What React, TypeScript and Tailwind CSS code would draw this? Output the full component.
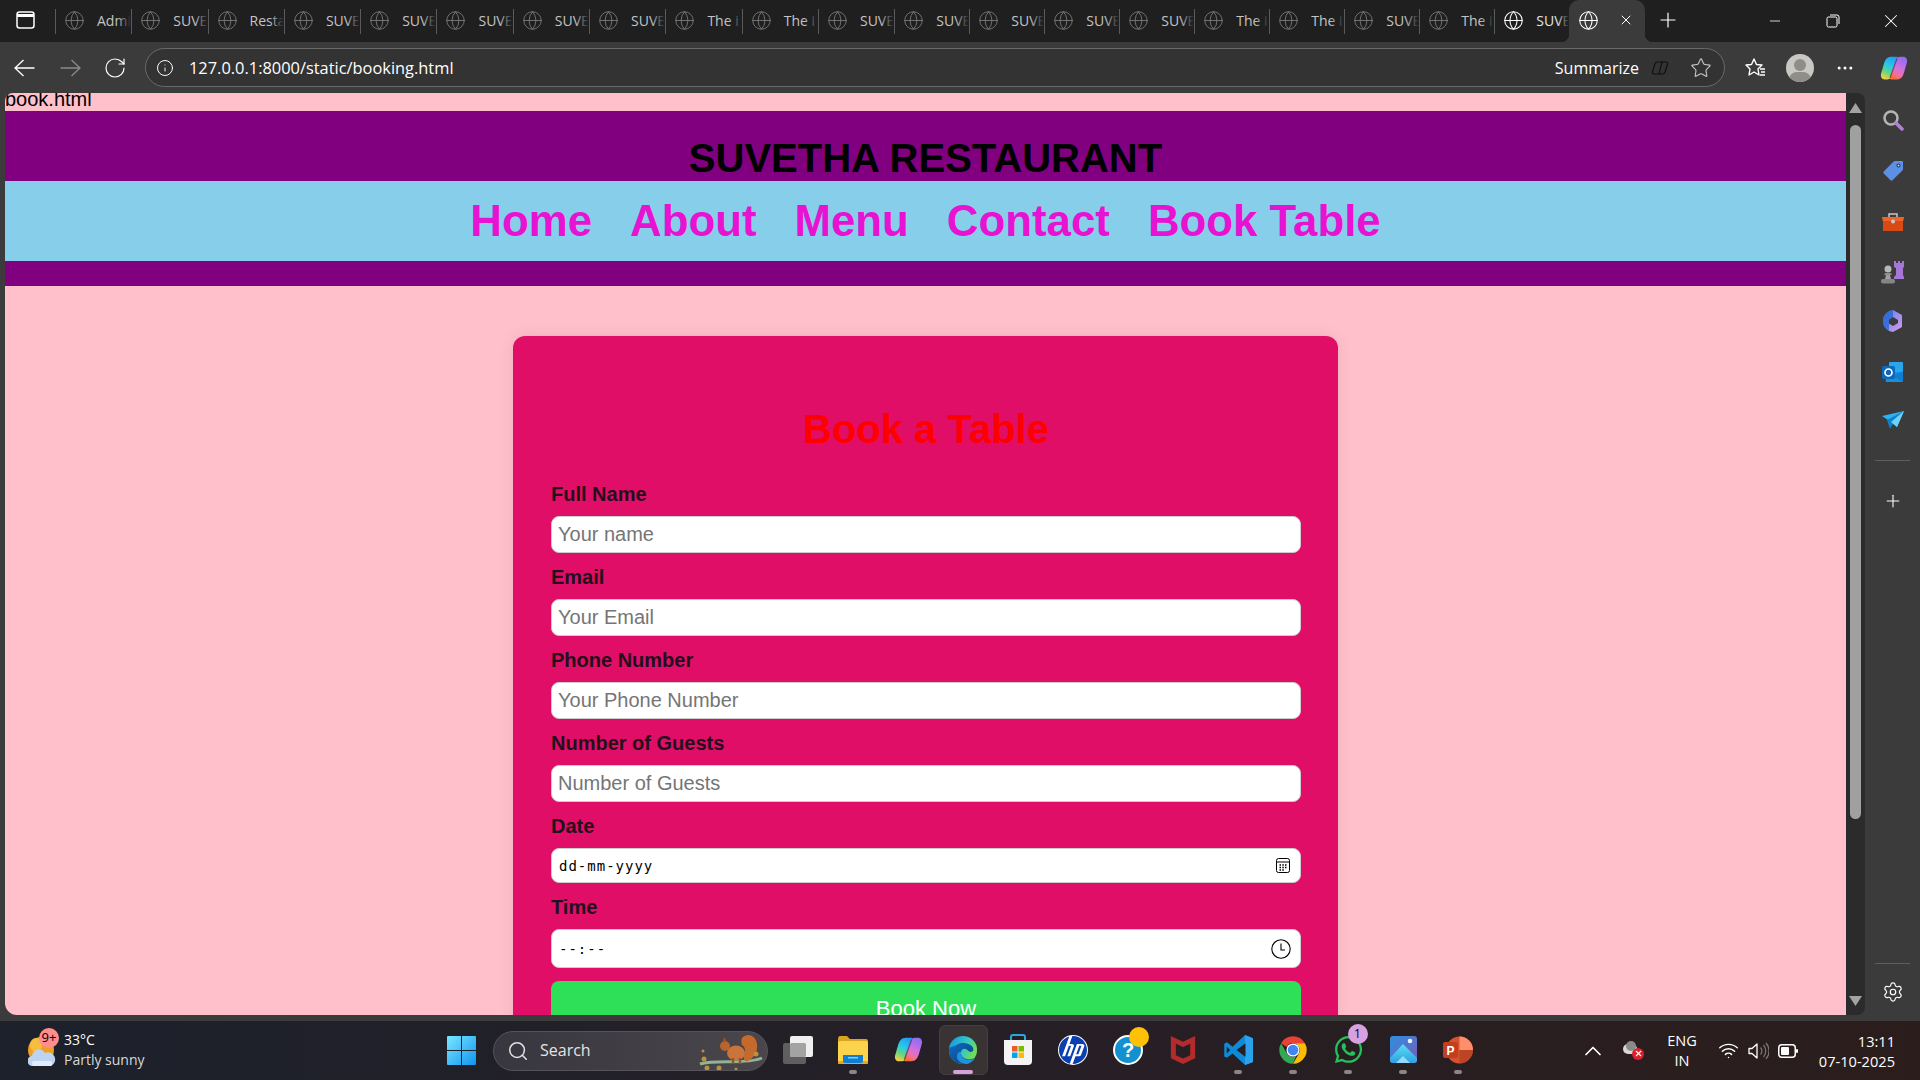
import React from "react";
import { RotateCw, Info, Star, MoreHorizontal, X, Plus, Minus, Globe, Search, Settings, ChevronUp, Wifi } from "lucide-react";
import { SiHp, SiMcafee } from "react-icons/si";
import { FaWhatsapp } from "react-icons/fa";

const tabs = ["Admi","SUVE","Resta","SUVE","SUVE","SUVE","SUVE","SUVE","The i","The i","SUVE","SUVE","SUVE","SUVE","SUVE","The i","The i","SUVE","The i"];

function Copilot({ id, size }: { id: string; size: number }) {
  return (
    <svg width={size} height={size} viewBox="0 0 32 32">
      <defs>
        <linearGradient id={id + "a"} x1=".7" y1="0" x2=".3" y2="1"><stop offset="0" stopColor="#1f9df5" /><stop offset=".4" stopColor="#27c8e8" /><stop offset=".7" stopColor="#5ed68a" /><stop offset="1" stopColor="#f2cf3e" /></linearGradient>
        <linearGradient id={id + "b"} x1=".7" y1="0" x2=".3" y2="1"><stop offset="0" stopColor="#8f6cf0" /><stop offset=".5" stopColor="#d070e0" /><stop offset=".8" stopColor="#f27098" /><stop offset="1" stopColor="#ff6a30" /></linearGradient>
      </defs>
      <path d="M13 3h6c1.500 0 2 1.500 1.500 3L14.500 24c-1 3-3 5-6 5H5.500C2 29 .5 26 1.200 22.500L4.500 11C6 6 8.500 3 13 3z" fill={`url(#${id}a)`} />
      <path d="M19 29h-6c-1.500 0-2-1.500-1.500-3L17.500 8c1-3 3-5 6-5h3C30 3 31.500 6 30.800 9.500L27.500 21C26 26 23.500 29 19 29z" fill={`url(#${id}b)`} />
      <path d="M11.500 27 19.500 5" stroke="#2a2020" strokeWidth="1.400" opacity=".55" />
    </svg>
  );
}

function Edge() {
  return (
    <svg width="30" height="30" viewBox="0 0 32 32">
      <defs>
        <linearGradient id="eg" x1=".1" y1=".2" x2=".9" y2=".6"><stop offset="0" stopColor="#1a9fe0" /><stop offset=".55" stopColor="#36c8c0" /><stop offset="1" stopColor="#6fdc58" /></linearGradient>
        <linearGradient id="eb" x1="0" y1="0" x2="1" y2="1"><stop offset="0" stopColor="#0f6cc0" /><stop offset="1" stopColor="#0a3f80" /></linearGradient>
      </defs>
      <circle cx="16" cy="16" r="15" fill="url(#eg)" />
      <path d="M1 16C1 24.500 8 31 16 31c5 0 9.500-2.500 12.500-6.500-3 1.500-6 2-9 1-4-1.200-6.500-4.500-5.500-8 .7-2.500 3.500-3.500 6-2 1.500 1 2 2.500 4 2.500 3 0 4-2.500 2-5.500-3-4-11-5.500-16-2.500C5 13 1 12 1 16z" fill="url(#eb)" />
      <path d="M14 18c-1 3.500 1.500 6.800 5.500 8 3 1 6 .5 9-1-2 3-5 5-8 5.800C14 31 9 27 9.500 22c.3-2.500 2.500-5 4.500-4z" fill="#1f94dd" />
    </svg>
  );
}

function Chrome() {
  return (
    <svg width="30" height="30" viewBox="0 0 48 48">
      <path d="M24 2a22 22 0 0 1 19.050 11H24a11 11 0 0 0-10 6L4.950 13A22 22 0 0 1 24 2z" fill="#e94235" />
      <path d="M43.050 13A22 22 0 0 1 24 46l9.500-16.500A11 11 0 0 0 33.500 19 11 11 0 0 0 24 13z" fill="#fbbc05" />
      <path d="M4.950 13 14 29a11 11 0 0 0 15 4.500L24 46A22 22 0 0 1 4.950 13z" fill="#34a853" />
      <circle cx="24" cy="24" r="10.500" fill="#fff" />
      <circle cx="24" cy="24" r="8.500" fill="#4285f4" />
    </svg>
  );
}

function Squirrel() {
  return (
    <svg width="68" height="40" viewBox="0 0 68 40">
      <path d="M4 32C20 27 50 33 66 26" stroke="#8fb596" strokeWidth="3" fill="none" />
      <path d="M46 6c6-6 14-2 15 6 1 7-3 14-9 17-4 1-5-3-4-6 2-5 1-8-2-10-1-2-1-5 0-7z" fill="#c46a2c" />
      <ellipse cx="40" cy="21" rx="9" ry="7.500" fill="#c9743a" />
      <circle cx="29" cy="14" r="5" fill="#b8642c" />
      <path d="M27 10l1-5 3 5z" fill="#a5541f" />
      <path d="M37 26v6M44 26v6" stroke="#9c5322" strokeWidth="2.500" />
      <g fill="#b9913f"><circle cx="8" cy="27" r="2.500" /><circle cx="11" cy="36" r="2.500" /><circle cx="23" cy="36" r="2.500" /><circle cx="60" cy="22" r="2.500" /><circle cx="7" cy="19" r="1.500" /><circle cx="40" cy="37" r="1.500" /></g>
    </svg>
  );
}

function TaskView() {
  return (
    <svg width="30" height="28" viewBox="0 0 30 28">
      <rect x="0" y="7" width="23" height="21" rx="2" fill="#5f5f5f" />
      <rect x="7" y="0" width="23" height="21" rx="2" fill="#efefef" />
      <rect x="7" y="7" width="16" height="14" rx="1.500" fill="#a3a3a3" />
    </svg>
  );
}

function Explorer() {
  return (
    <svg width="30" height="28" viewBox="0 0 30 28">
      <path d="M0 3c0-2 1-3 2-3h7l3 3h16a2 2 0 0 1 2 2v3H0z" fill="#d9a520" />
      <rect x="0" y="5" width="30" height="23" rx="2" fill="#fcd34d" />
      <rect x="0" y="25" width="30" height="3" rx="1" fill="#e8a818" />
      <path d="M5 19h20v6a2 2 0 0 1-2 2H7a2 2 0 0 1-2-2z" fill="#0f7fd6" />
      <rect x="10" y="21" width="10" height="1.500" fill="#7fd0f8" />
    </svg>
  );
}

function Store() {
  return (
    <svg width="30" height="31" viewBox="0 0 30 31">
      <path d="M8 8V3a2 2 0 0 1 2-2h10a2 2 0 0 1 2 2v5" fill="none" stroke="#26a9e0" strokeWidth="2" />
      <path d="M1 6h28v21a4 4 0 0 1-4 4H5a4 4 0 0 1-4-4z" fill="#f4f4f4" />
      <rect x="9" y="12" width="5.500" height="5.500" fill="#ee5a2a" />
      <rect x="15.500" y="12" width="5.500" height="5.500" fill="#7fba00" />
      <rect x="9" y="18.500" width="5.500" height="5.500" fill="#00a4ef" />
      <rect x="15.500" y="18.500" width="5.500" height="5.500" fill="#ffb900" />
    </svg>
  );
}

function Photos() {
  return (
    <svg width="27" height="27" viewBox="0 0 27 27">
      <defs>
        <linearGradient id="phb" x1="0" y1="0" x2="1" y2="1"><stop offset="0" stopColor="#2e8fe0" /><stop offset="1" stopColor="#7a5ab8" /></linearGradient>
        <linearGradient id="phm" x1="0" y1="0" x2="0" y2="1"><stop offset="0" stopColor="#5be0f0" /><stop offset="1" stopColor="#2f9fe6" /></linearGradient>
      </defs>
      <rect width="27" height="27" rx="3" fill="url(#phb)" />
      <circle cx="20" cy="5" r="2.300" fill="#e6f4ff" />
      <path d="M0 22 13 8l14 14v2a3 3 0 0 1-3 3H3a3 3 0 0 1-3-3z" fill="url(#phm)" />
      <path d="M6 27l7-7 7 7z" fill="#bdeefb" opacity=".7" />
    </svg>
  );
}

function PowerPoint() {
  return (
    <svg width="30" height="30" viewBox="0 0 30 30">
      <circle cx="16.500" cy="15" r="13.500" fill="#d35230" />
      <path d="M16.500 1.500a13.500 13.500 0 0 1 13.500 13.500H16.500z" fill="#ff8f6b" />
      <path d="M16.500 15H30a13.500 13.500 0 0 1-13.500 13.500z" fill="#a83a1c" opacity=".55" />
      <rect x="0" y="7" width="15" height="16" rx="2" fill="#c43e1c" />
      <text x="7.500" y="20" textAnchor="middle" fontSize="12" fontWeight="700" fill="#fff" fontFamily="Liberation Sans, sans-serif">P</text>
    </svg>
  );
}

function VSCode() {
  return (
    <svg width="30" height="30" viewBox="0 0 24 24">
      <path d="M17.600 0 7.700 9.300 3.100 5.800 1 6.900v10.200l2.100 1.100 4.600-3.500 9.900 9.300L24 21.500v-19L17.600 0zm.4 6.700v10.600L11 12l7-5.300zM3 9.300 5.700 12 3 14.700V9.300z" fill="#0e8ad8" />
      <path d="M17.600 0 24 2.500v19L17.600 24z" fill="#2aa3ec" />
      <path d="M18 6.700v10.600L11 12z" fill="#272023" />
    </svg>
  );
}

function TaskSlot({ children, dot, active }: { children: React.ReactNode; dot?: boolean; active?: boolean }) {
  return (
    <div className="relative w-[55px] h-[59px] flex items-center justify-center">
      {active && <div className="absolute left-[3px] top-[4px] w-[49px] h-[50px] rounded-md bg-[#3a3333] border border-[#453e3e]" />}
      <div className="relative flex items-center justify-center -mt-[2px]">{children}</div>
      {dot && <div className="absolute left-[23.500px] top-[49px] w-[8px] h-[4px] rounded-full bg-[#8a8686]" />}
      {active && <div className="absolute left-[17.500px] top-[49px] w-[20px] h-[4px] rounded-full bg-[#d9a0e0]" />}
    </div>
  );
}

function Field({ label, placeholder }: { label: string; placeholder: string }) {
  return (
    <div className="flex flex-col">
      <label className="text-[20px] leading-[23px] font-bold text-[#24101c] mt-[13px] mb-[10px]">{label}</label>
      <input readOnly placeholder={placeholder} className="h-[37px] w-full rounded-lg border border-[#cccccc] bg-white px-[6px] text-[20px] text-black placeholder:text-[#757575] outline-none" />
    </div>
  );
}

export default function App() {
  return (
    <div className="w-[1920px] h-[1080px] overflow-hidden flex flex-col bg-[#3b3b3b] font-['Open_Sans',sans-serif]">
      {/* tab strip */}
      <div className="h-[42px] bg-[#1f1f1f] flex items-stretch relative shrink-0">
        <div className="w-[56px] flex items-center justify-center pr-[5px] pb-[2px] relative">
          <svg width="19" height="18" viewBox="0 0 19 18" fill="none" stroke="#fff" strokeWidth="1.500"><rect x="1" y="1" width="17" height="16" rx="2.500" /><path d="M1 4.500h17" strokeWidth="3" /></svg>
          <div className="absolute right-0 top-[9px] h-[25px] w-px bg-[#5a5a5a]" />
        </div>
        {tabs.map((t, i) => (
          <div key={i} className={i < 11 ? "relative w-[76.300px] flex items-center pl-[8px] pb-[2px] overflow-hidden" : "relative w-[75px] flex items-center pl-[8px] pb-[2px] overflow-hidden"}>
            <Globe size={21} strokeWidth={1} className="text-[#7b7b7b] shrink-0" />
            <span className="ml-[12px] text-[14px] whitespace-nowrap text-[#c4c4c4]">{t}</span>
            <div className="absolute right-[1px] top-0 bottom-0 w-[14px] bg-gradient-to-r from-transparent to-[#1f1f1f]" />
            <div className="absolute right-0 top-[9px] h-[25px] w-px bg-[#5a5a5a]" />
          </div>
        ))}
        <div className="relative w-[74px] flex items-center pl-[8px] pb-[2px] overflow-hidden">
          <Globe size={21} strokeWidth={1.2} className="text-white shrink-0" />
          <span className="ml-[12px] text-[14px] whitespace-nowrap text-[#e4e4e4]">SUVE</span>
          <div className="absolute right-0 top-0 bottom-0 w-[12px] bg-gradient-to-r from-transparent to-[#1f1f1f]" />
        </div>
        <div className="relative w-[76px] rounded-t-[10px] bg-[#3b3b3b] flex items-center pl-[9px] pb-[2px]">
          <Globe size={21} strokeWidth={1.2} className="text-white shrink-0" />
          <X size={16} strokeWidth={1.5} className="text-white ml-[19px]" />
          <div className="absolute -left-[8px] bottom-0 w-[8px] h-[8px] bg-[radial-gradient(circle_at_0_0,#1f1f1f_8px,#3b3b3b_8.500px)]" />
          <div className="absolute -right-[8px] bottom-0 w-[8px] h-[8px] bg-[radial-gradient(circle_at_100%_0,#1f1f1f_8px,#3b3b3b_8.500px)]" />
        </div>
        <div className="ml-[11px] w-[24px] flex items-center justify-center pb-[2px]">
          <Plus size={24} strokeWidth={1.2} className="text-white" />
        </div>
        <div className="ml-auto flex items-center">
          <div className="w-[58px] flex justify-center"><Minus size={16} strokeWidth={1.2} className="text-white" /></div>
          <div className="w-[58px] flex justify-center">
            <svg width="14" height="14" viewBox="0 0 14 14" fill="none" stroke="#fff" strokeWidth="1"><rect x="1" y="3" width="10" height="10" rx="1.500" /><path d="M4 1h7a2 2 0 0 1 2 2v7" /></svg>
          </div>
          <div className="w-[58px] flex justify-center"><X size={22} strokeWidth={1.1} className="text-white" /></div>
        </div>
      </div>

      {/* toolbar */}
      <div className="h-[51px] shrink-0 bg-[#3b3b3b] flex items-center">
        <div className="w-[49px] flex justify-center">
          <svg width="21" height="18" viewBox="0 0 21 18" fill="none" stroke="#fff" strokeWidth="1.300"><path d="M20.500 9H1M9.500 1 1 9l8.500 8" /></svg>
        </div>
        <div className="w-[42px] flex justify-center">
          <svg width="21" height="18" viewBox="0 0 21 18" fill="none" stroke="#8a8a8a" strokeWidth="1.300"><path d="M.5 9H20M11.500 1 20 9l-8.500 8" /></svg>
        </div>
        <div className="w-[47px] flex justify-center"><RotateCw size={24} strokeWidth={1.2} className="text-white" /></div>
        <div className="ml-[7px] w-[1580px] h-[39px] rounded-full border border-[#6a6a6a] bg-[#333333] flex items-center pl-[10px] pr-[12px]">
          <Info size={18} strokeWidth={1.3} className="text-white" />
          <span className="ml-[15px] pt-[1px] text-[16.400px] text-white">127.0.0.1:8000/static/booking.html</span>
          <span className="ml-auto pt-[1px] text-[16px] text-white">Summarize</span>
          <svg className="ml-[12px]" width="18" height="18" viewBox="0 0 18 18" fill="none" stroke="#111" strokeWidth="1.200"><path d="M6 3h5L8 15H3C2 15 1 14 1.500 12.500L4 5c.3-1 1-2 2-2z" /><path d="M10 3h5c1 0 2 1 1.500 2.500L14 13c-.3 1-1 2-2 2H8" /></svg>
          <Star size={22} strokeWidth={1.2} className="ml-[21px] text-[#c8c8c8]" />
        </div>
        <div className="ml-[18px]">
          <svg width="24" height="24" viewBox="0 0 24 24" fill="none" stroke="#fff" strokeWidth="1.400"><path d="M11 3l2.500 5.500 5.500.5-4 4 1 6-5-3-5 3 1-6-4-4 5.500-.5z" strokeLinejoin="round" /><path d="M17 13h5M18 16h4M17 19h5" /></svg>
        </div>
        <div className="ml-[19px] relative w-[28px] h-[28px] rounded-full bg-[#c9c8c2] overflow-hidden">
          <div className="absolute left-[8px] top-[5px] w-[12px] h-[12px] rounded-full bg-[#8f8e8a]" />
          <div className="absolute left-[3px] top-[18px] w-[22px] h-[16px] rounded-full bg-[#8f8e8a]" />
        </div>
        <div className="ml-[17px] w-[28px] flex justify-center"><MoreHorizontal size={20} strokeWidth={1.6} className="text-white" /></div>
        <div className="ml-[21px]"><Copilot id="cp1" size={28} /></div>
      </div>

      {/* body */}
      <div className="h-[922px] shrink-0 flex">
        <div className="w-[5px]" />
        <div className="w-[1841px] bg-[#ffc0cb] rounded-tl-[8px] rounded-bl-[12px] overflow-hidden font-['Liberation_Sans',sans-serif] text-black">
          <div className="h-[18px] overflow-hidden text-[20px] leading-[23px]"><div className="-mt-[5px]">book.html</div></div>
          <header className="bg-[#800080] pb-[25px]">
            <h1 className="h-[70px] flex items-end justify-center text-[40px] leading-[46px] font-bold text-black">SUVETHA RESTAURANT</h1>
            <nav className="h-[80px] bg-[#87ceeb] flex items-center justify-center gap-[38px] text-[43.800px] font-bold text-[#e812d2]">
              <a>Home</a><a>About</a><a>Menu</a><a>Contact</a><a>Book Table</a>
            </nav>
          </header>
          <div className="mx-auto mt-[50px] w-[825px] rounded-[12px] bg-[#e00e66] pl-[38px] pr-[37px] shadow-[0_0_16px_rgba(0,0,0,0.08)]">
            <h2 className="h-[134px] pt-[70px] text-center text-[40px] leading-[46px] font-bold text-[#ff0000]">Book a Table</h2>
            <div>
              <Field label="Full Name" placeholder="Your name" />
              <Field label="Email" placeholder="Your Email" />
              <Field label="Phone Number" placeholder="Your Phone Number" />
              <Field label="Number of Guests" placeholder="Number of Guests" />
              <label className="block text-[20px] leading-[23px] font-bold text-[#24101c] mt-[13px] mb-[10px]">Date</label>
              <div className="h-[35px] rounded-lg border border-[#cccccc] bg-white flex items-center pl-[7px] pr-[10px] font-['DejaVu_Sans_Mono',monospace] text-[14px] tracking-[1px] text-black">
                <span className="pt-[1px]">dd-mm-yyyy</span>
                <svg className="ml-auto" width="14" height="15" viewBox="0 0 14 15" fill="none" stroke="#000" strokeWidth="1"><rect x=".5" y=".5" width="13" height="14" rx="2" /><path d="M.5 4h13" /><path d="M3.500 7h1.500M6.300 7h1.500M9 7h1.500M3.500 9.500h1.500M6.300 9.500h1.500M9 9.500h1.500M3.500 12h1.500M6.300 12h1.500" strokeWidth="1.300" /></svg>
              </div>
              <label className="block text-[20px] leading-[23px] font-bold text-[#24101c] mt-[13px] mb-[10px]">Time</label>
              <div className="h-[39px] rounded-lg border border-[#cccccc] bg-white flex items-center pl-[7px] pr-[9px] font-['DejaVu_Sans_Mono',monospace] text-[14px] tracking-[1px] text-black">
                <span className="pt-[1px]">--:--</span>
                <svg className="ml-auto" width="20" height="20" viewBox="0 0 20 20" fill="none" stroke="#000" strokeWidth="1.100"><circle cx="10" cy="10" r="9.200" /><path d="M10 4.500V11h4" /></svg>
              </div>
              <button className="mt-[13px] h-[54px] w-full rounded-lg bg-[#2ee058] text-white text-[22px]">Book Now</button>
            </div>
          </div>
        </div>
        {/* scrollbar */}
        <div className="w-[19px] bg-[#2b2b2b] rounded-tr-[8px] rounded-br-[8px] flex flex-col items-center">
          <svg className="mt-[10px] shrink-0" width="13" height="10" viewBox="0 0 13 10"><path d="M6.500 0 13 10H0z" fill="#a3a3a3" /></svg>
          <div className="mt-[12px] w-[11px] h-[694px] rounded-full bg-[#a0a0a0] shrink-0" />
          <svg className="mt-auto mb-[9px] shrink-0" width="13" height="10" viewBox="0 0 13 10"><path d="M0 0h13L6.500 10z" fill="#a3a3a3" /></svg>
        </div>
        {/* sidebar */}
        <div className="flex-1 flex flex-col items-center pt-[15px]">
          <div className="h-[24px] flex items-center">
            <svg width="22" height="22" viewBox="0 0 22 22" fill="none"><circle cx="9" cy="9" r="6.500" stroke="#b4b4b4" strokeWidth="2.500" /><path d="M14 14l6 6" stroke="#b27fdc" strokeWidth="3.500" strokeLinecap="round" /></svg>
          </div>
          <div className="h-[24px] mt-[27px] flex items-center">
            <svg width="22" height="22" viewBox="0 0 22 22"><path d="M13 1h7a1 1 0 0 1 1 1v7c0 .6-.2 1-.6 1.400L10.500 20.300a1.500 1.500 0 0 1-2 0L1.700 13.500a1.500 1.500 0 0 1 0-2L11.600 1.600C12 1.200 12.400 1 13 1z" fill="#5c90e6" /><circle cx="16.500" cy="5.500" r="2" fill="#1c2c50" /><circle cx="16.500" cy="5.500" r="1" fill="#cfe0ff" /></svg>
          </div>
          <div className="h-[24px] mt-[27px] flex items-center">
            <svg width="22" height="20" viewBox="0 0 22 20"><path d="M7 5V2h8v3" fill="none" stroke="#c8c8c8" strokeWidth="1.500" /><path d="M0 5h22l-1 5H1z" fill="#f0642a" /><path d="M1 9h20v10H1z" fill="#d84a14" /><circle cx="11" cy="9.500" r="2" fill="#c9c9c9" /></svg>
          </div>
          <div className="h-[24px] mt-[26px] flex items-center">
            <svg width="24" height="24" viewBox="0 0 24 24"><path d="M13 1h2v2h2V1h2v2h2V1h2v6l-1 1v7l1 2v2H13v-2l2-2V8l-2-1z" fill="#a578d8" /><circle cx="7" cy="9" r="3.500" fill="#b8b8b8" /><path d="M4 13h6l1 2H3z" fill="#8c8c8c" /><path d="M5 15h4l1 4H4z" fill="#a0a0a0" /><rect x="0" y="19" width="14" height="4.500" rx="2" fill="#858585" /></svg>
          </div>
          <div className="h-[24px] mt-[25px] flex items-center">
            <svg width="22" height="24" viewBox="0 0 22 24"><defs><linearGradient id="m1" x1="0" y1="0" x2="1" y2="1"><stop offset="0" stopColor="#5a7fe8" /><stop offset="1" stopColor="#d79af0" /></linearGradient></defs><path d="M11 1 20 6V18L11 23C5 22 1 17.500 1 12S5 2 11 1z" fill="url(#m1)" /><path d="M11 8l5 3v3l-5 3-4-2.500v-4z" fill="#3b3b3b" /><path d="M11 1C5 2 1 6.500 1 12s2 8 6 9V10.500l4-2.500z" fill="#1f66d0" opacity=".75" /></svg>
          </div>
          <div className="h-[24px] mt-[27px] flex items-center">
            <svg width="22" height="22" viewBox="0 0 22 22"><rect x="7" y="1" width="14" height="12" rx="1" fill="#28a8ea" /><path d="M3 11h18v9a1 1 0 0 1-1 1H4z" fill="#1490df" /><path d="M11 15l10-5v11z" fill="#0a6cc4" opacity=".5" /><rect x="0" y="5" width="13" height="13" rx="1.500" fill="#0a68bd" /><circle cx="6.500" cy="11.500" r="3.500" fill="none" stroke="#fff" strokeWidth="1.700" /></svg>
          </div>
          <div className="h-[24px] mt-[24px] flex items-center">
            <svg width="22" height="18" viewBox="0 0 22 18"><path d="M0 5 22 0 15 16 9 11z" fill="#2cb2ee" /><path d="M22 0 5 9l3 9 3-5z" fill="#0f7fd0" /><path d="M22 0 9 11l6 5z" fill="#6fd3f6" /></svg>
          </div>
          <div className="mt-[28px] w-[35px] h-px bg-[#5e5e5e]" />
          <Plus size={20} strokeWidth={1.3} className="mt-[30px] text-white" />
          <div className="mt-auto mb-[12px] flex flex-col items-center">
            <div className="w-[35px] h-px bg-[#5e5e5e] mb-[17px]" />
            <Settings size={22} strokeWidth={1.3} className="text-white" />
          </div>
        </div>
      </div>

      {/* gap + taskbar */}
      <div className="h-[6px] shrink-0 bg-[#3b3b3b]" />
      <div className="h-[59px] shrink-0 flex items-center bg-gradient-to-r from-[#1c212b] via-[#251f26] to-[#2b1d1c] text-white">
        <div className="w-[447px] h-full pl-[28px] flex items-center">
          <div className="relative w-[36px] h-[40px]">
            <svg className="absolute left-0 top-[6px]" width="28" height="30" viewBox="0 0 28 30"><circle cx="13" cy="13" r="13" fill="#f0a020" /><ellipse cx="8" cy="8" rx="6" ry="7" fill="#f7bd3e" /><path d="M5 29a5 5 0 0 1-1-10 7 7 0 0 1 13-3 6 6 0 0 1 6 13z" fill="#bcd4f2" /><path d="M5 29a4 4 0 0 1 0-5h18a3 3 0 0 1 0 5z" fill="#e0ecfc" /></svg>
            <div className="absolute left-[11px] -top-[3px] w-[20px] h-[20px] rounded-full bg-[#ff8d8d] flex items-center justify-center text-[13px] leading-none text-black">9+</div>
          </div>
          <div className="flex flex-col pb-[2px] text-[14px] leading-[20px]">
            <span className="text-white">33°C</span>
            <span className="text-[#d8d8d8]">Partly sunny</span>
          </div>
        </div>
        <div className="w-[46px] h-full flex items-center">
          <svg width="29" height="29" viewBox="0 0 29 29"><defs><linearGradient id="wn" x1="0" y1="0" x2="1" y2="1"><stop offset="0" stopColor="#7be6ff" /><stop offset="1" stopColor="#0f94f0" /></linearGradient></defs><path d="M1 0h13v14H0V1a1 1 0 0 1 1-1zM15 0h13a1 1 0 0 1 1 1v13H15zM0 15h14v14H1a1 1 0 0 1-1-1zM15 15h14v13a1 1 0 0 1-1 1H15z" fill="url(#wn)" /></svg>
        </div>
        <div className="w-[275px] h-[40px] rounded-full bg-gradient-to-r from-[#38363e] to-[#4a464c] border border-[#56545a] flex items-center pl-[13px] relative overflow-hidden">
          <Search size={22} strokeWidth={1.7} className="text-[#e0e0e0]" />
          <span className="ml-[11px] pb-[1px] text-[16px] text-[#e4e4e4]">Search</span>
          <div className="absolute right-[3px] top-0"><Squirrel /></div>
        </div>
        <div className="w-[2.500px]" />
        <TaskSlot><TaskView /></TaskSlot>
        <TaskSlot dot><Explorer /></TaskSlot>
        <TaskSlot><Copilot id="cp2" size={29} /></TaskSlot>
        <TaskSlot active><Edge /></TaskSlot>
        <TaskSlot><Store /></TaskSlot>
        <TaskSlot>
          <div className="w-[30px] h-[30px] rounded-full bg-white flex items-center justify-center"><SiHp size={28} className="text-[#0a3fb4]" /></div>
        </TaskSlot>
        <TaskSlot>
          <div className="relative w-[30px] h-[30px] rounded-full bg-[#1290d0] border-2 border-white flex items-center justify-center text-[20px] font-bold text-white font-['Liberation_Sans',sans-serif]">
            ?
            <div className="absolute left-[14px] -top-[10px] w-[20px] h-[20px] rounded-full bg-[#ffc107]" />
          </div>
        </TaskSlot>
        <TaskSlot><SiMcafee size={28} className="text-[#b52a2a]" /></TaskSlot>
        <TaskSlot dot><VSCode /></TaskSlot>
        <TaskSlot dot><Chrome /></TaskSlot>
        <TaskSlot dot>
          <div className="relative">
            <FaWhatsapp size={31} className="text-[#25c05a]" />
            <div className="absolute left-[15px] -top-[10px] w-[20px] h-[20px] rounded-full bg-[#d8a0e0] flex items-center justify-center text-[12px] text-black">1</div>
          </div>
        </TaskSlot>
        <TaskSlot dot><Photos /></TaskSlot>
        <TaskSlot dot><PowerPoint /></TaskSlot>
        <div className="ml-[100.500px] w-[14px] flex justify-center"><ChevronUp size={28} strokeWidth={1.5} className="text-white shrink-0" /></div>
        <div className="ml-[23px] relative w-[20px] h-[20px]">
          <div className="absolute left-0 top-[3px] w-[14px] h-[10px] rounded-full bg-[#d8d8d8]" />
          <div className="absolute left-[3px] top-0 w-[10px] h-[10px] rounded-full bg-[#8a8a8a]" />
          <div className="absolute left-[9px] top-[7px] w-[12px] h-[12px] rounded-full bg-[#d9202c] flex items-center justify-center"><X size={9} strokeWidth={3} className="text-white" /></div>
        </div>
        <div className="ml-[23px] w-[32px] flex flex-col items-center text-[14.500px] leading-[20px] text-white"><span>ENG</span><span>IN</span></div>
        <div className="ml-[20px]"><Wifi size={21} strokeWidth={1.7} className="text-white" /></div>
        <div className="ml-[9px]">
          <svg width="21" height="18" viewBox="0 0 21 18" fill="none"><path d="M1 6.500h3L9 2v14l-5-4.500H1z" stroke="#fff" strokeWidth="1.300" strokeLinejoin="round" /><path d="M12.500 5.500a5 5 0 0 1 0 7M15.500 3a9 9 0 0 1 0 12M18 1a12 12 0 0 1 0 16" stroke="#7d7878" strokeWidth="1.200" /></svg>
        </div>
        <div className="ml-[9px]">
          <svg width="20" height="14" viewBox="0 0 20 14"><rect x=".75" y=".75" width="16.500" height="12.500" rx="3" fill="none" stroke="#fff" strokeWidth="1.500" /><rect x="3" y="3" width="8" height="8" rx="1" fill="#fff" /><rect x="18" y="5" width="2" height="4" rx="1" fill="#fff" /></svg>
        </div>
        <div className="ml-auto pr-[25px] flex flex-col items-end text-[14.600px] leading-[20px] text-white"><span>13:11</span><span>07-10-2025</span></div>
      </div>
    </div>
  );
}
